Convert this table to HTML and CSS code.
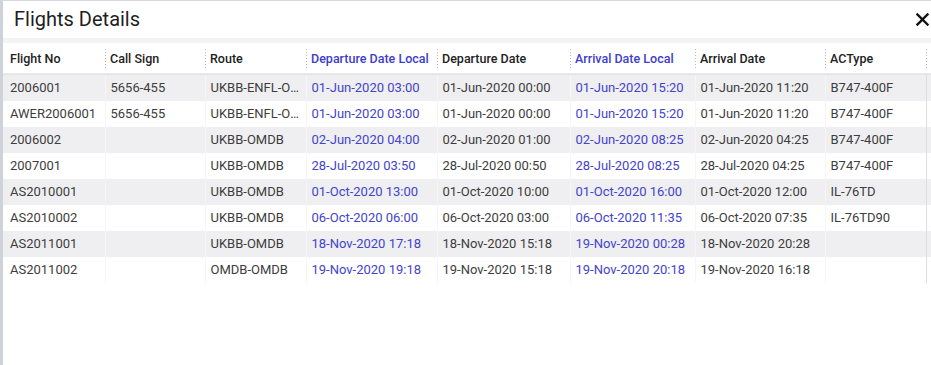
FILE: index.html
```html
<!DOCTYPE html>
<html>
<head>
<meta charset="utf-8">
<link rel="stylesheet" href="styles.css">
</head>
<body>
<div class="dialog">
  <div class="title-bar">
    <span class="title">Flights Details</span>
    <svg class="close" width="13" height="13" viewBox="0 0 13 13" aria-label="Close"><path d="M1.5 1.5 L11.5 11.5 M11.5 1.5 L1.5 11.5" stroke="#111" stroke-width="2.4" stroke-linecap="square" fill="none"/></svg>
  </div>
  <div class="band"></div>
  <table class="grid">
    <colgroup>
      <col class="c1"><col class="c2"><col class="c3"><col class="c4"><col class="c5"><col class="c6"><col class="c7"><col class="c8"><col class="c9">
    </colgroup>
    <thead>
      <tr>
        <th class="first">Flight No</th>
        <th>Call Sign</th>
        <th>Route</th>
        <th class="blue">Departure Date Local</th>
        <th>Departure Date</th>
        <th class="blue">Arrival Date Local</th>
        <th>Arrival Date</th>
        <th>ACType</th>
        <th class="filler"></th>
      </tr>
    </thead>
    <tbody>
      <tr><td class="first">2006001</td><td>5656-455</td><td title="UKBB-ENFL-OMDB">UKBB-ENFL-OMDB</td><td class="blue">01-Jun-2020 03:00</td><td>01-Jun-2020 00:00</td><td class="blue">01-Jun-2020 15:20</td><td>01-Jun-2020 11:20</td><td>B747-400F</td><td class="filler"></td></tr>
      <tr><td class="first">AWER2006001</td><td>5656-455</td><td title="UKBB-ENFL-OMDB">UKBB-ENFL-OMDB</td><td class="blue">01-Jun-2020 03:00</td><td>01-Jun-2020 00:00</td><td class="blue">01-Jun-2020 15:20</td><td>01-Jun-2020 11:20</td><td>B747-400F</td><td class="filler"></td></tr>
      <tr><td class="first">2006002</td><td></td><td>UKBB-OMDB</td><td class="blue">02-Jun-2020 04:00</td><td>02-Jun-2020 01:00</td><td class="blue">02-Jun-2020 08:25</td><td>02-Jun-2020 04:25</td><td>B747-400F</td><td class="filler"></td></tr>
      <tr><td class="first">2007001</td><td></td><td>UKBB-OMDB</td><td class="blue">28-Jul-2020 03:50</td><td>28-Jul-2020 00:50</td><td class="blue">28-Jul-2020 08:25</td><td>28-Jul-2020 04:25</td><td>B747-400F</td><td class="filler"></td></tr>
      <tr><td class="first">AS2010001</td><td></td><td>UKBB-OMDB</td><td class="blue">01-Oct-2020 13:00</td><td>01-Oct-2020 10:00</td><td class="blue">01-Oct-2020 16:00</td><td>01-Oct-2020 12:00</td><td>IL-76TD</td><td class="filler"></td></tr>
      <tr><td class="first">AS2010002</td><td></td><td>UKBB-OMDB</td><td class="blue">06-Oct-2020 06:00</td><td>06-Oct-2020 03:00</td><td class="blue">06-Oct-2020 11:35</td><td>06-Oct-2020 07:35</td><td>IL-76TD90</td><td class="filler"></td></tr>
      <tr><td class="first">AS2011001</td><td></td><td>UKBB-OMDB</td><td class="blue">18-Nov-2020 17:18</td><td>18-Nov-2020 15:18</td><td class="blue">19-Nov-2020 00:28</td><td>18-Nov-2020 20:28</td><td></td><td class="filler"></td></tr>
      <tr><td class="first">AS2011002</td><td></td><td>OMDB-OMDB</td><td class="blue">19-Nov-2020 19:18</td><td>19-Nov-2020 15:18</td><td class="blue">19-Nov-2020 20:18</td><td>19-Nov-2020 16:18</td><td></td><td class="filler"></td></tr>
    </tbody>
  </table>
</div>
</body>
</html>
```
FILE: styles.css
```css
html, body {
  margin: 0;
  padding: 0;
  background: #ffffff;
}
body {
  font-family: Roboto, "Liberation Sans", sans-serif;
  color: #3a3a3a;
}
.dialog {
  width: 928px;
  height: 364px;
  border-left: 3px solid #cfd3d9;
  border-top: 1px solid #d5d8dd;
  background: #fff;
  overflow: hidden;
}
.title-bar {
  height: 37px;
  display: flex;
  align-items: center;
  justify-content: space-between;
  padding: 0 2px 0 11px;
}
.title {
  font-size: 20px;
  color: #1f1f1f;
  margin-top: -1px;
}
.close {
  display: block;
  margin-top: -1px;
}
.band {
  height: 5px;
  background: #f3f3f4;
}
.grid {
  border-collapse: collapse;
  table-layout: fixed;
  width: 928px;
}
.c1 { width: 102px; }
.c2 { width: 100px; }
.c3 { width: 101px; }
.c4 { width: 131px; }
.c5 { width: 133px; }
.c6 { width: 125px; }
.c7 { width: 130px; }
.c8 { width: 101px; }
.c9 { width: 5px; }
th {
  height: 31px;
  padding: 0 0 0 5px;
  text-align: left;
  font-size: 12.5px;
  font-weight: 500;
  color: #222;
  white-space: nowrap;
  overflow: hidden;
  background-image: repeating-linear-gradient(to bottom, #b9b9b9 0 1px, transparent 1px 3px);
  background-size: 1px 20px;
  background-position: left center;
  background-repeat: no-repeat;
  border-bottom: 1px solid #e2e2e4;
  box-shadow: inset 0 -1px 0 #ececee;
}
th.first {
  padding-left: 7px;
  background-image: none;
}
th.blue {
  color: #3d3dcc;
}
tbody tr {
  height: 26px;
}
tbody tr:nth-child(odd) {
  background: #efeff1;
}
td {
  padding: 0 0 0 5px;
  font-size: 13px;
  white-space: nowrap;
  overflow: hidden;
  text-overflow: ellipsis;
  border-left: 1px solid #f6f6f7;
  color: #3d3d3d;
}
td.blue {
  color: #4343cc;
}
td.first {
  padding-left: 7px;
  border-left: none;
}
td.filler {
  padding: 0;
  border-left: 1px solid #dcdde0;
}
```
